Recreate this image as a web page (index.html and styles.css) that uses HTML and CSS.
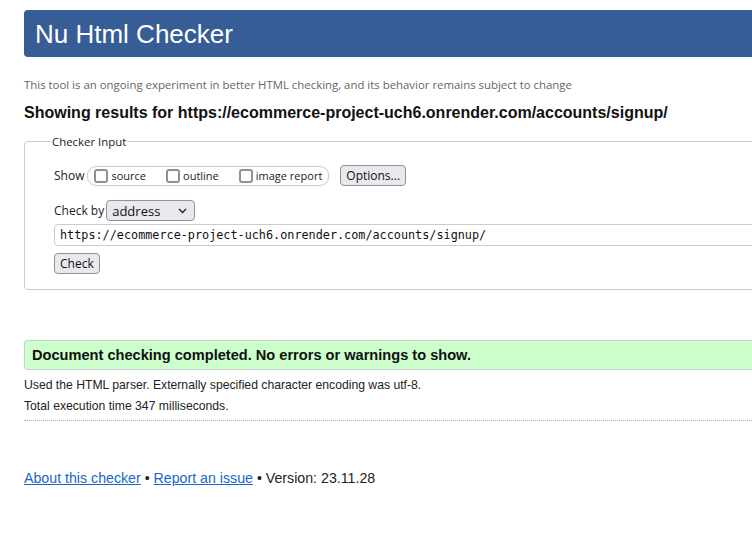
FILE: index.html
```html
<!DOCTYPE html>
<html lang="en">
<head>
    <meta charset="UTF-8">
    <meta name="viewport" content="width=device-width, initial-scale=1.0">
    <title>Nu Html Checker</title>
    <link rel="stylesheet" href="styles.css">
</head>
<body>
    <h1 class="masthead">Nu Html Checker</h1>
    <p class="tagline">This tool is an ongoing experiment in better HTML checking, and its behavior remains subject to change</p>
    <h2 class="results-for">Showing results for https://ecommerce-project-uch6.onrender.com/accounts/signup/</h2>

    <form class="checker-form">
        <fieldset class="checker-input">
            <legend>Checker Input</legend>
            <div class="show-row">
                <span class="row-label">Show</span>
                <span class="show-group">
                    <label><input type="checkbox" name="showsource"> source</label>
                    <label><input type="checkbox" name="showoutline"> outline</label>
                    <label><input type="checkbox" name="showimagereport"> image report</label>
                </span>
                <button type="button" class="btn">Options...</button>
            </div>
            <div class="checkby-row">
                <span class="row-label">Check by</span>
                <span class="select-wrap">
                    <select name="docselect">
                        <option>address</option>
                    </select>
                    <svg class="chevron" width="9" height="6" viewBox="0 0 9 6"><path d="M1 1 L4.5 4.5 L8 1" fill="none" stroke="#222" stroke-width="1.4"/></svg>
                </span>
            </div>
            <input class="doc-url" type="url" name="doc" value="https://ecommerce-project-uch6.onrender.com/accounts/signup/">
            <div>
                <button type="button" class="btn">Check</button>
            </div>
        </fieldset>
    </form>

    <p class="success">Document checking completed. No errors or warnings to show.</p>
    <p class="details">Used the HTML parser. Externally specified character encoding was utf-8.</p>
    <p class="details">Total execution time 347 milliseconds.</p>
    <hr class="dotted">

    <p class="footer">
        <a href="#">About this checker</a> &bull; <a href="#">Report an issue</a> &bull; Version: 23.11.28
    </p>
</body>
</html>
```

FILE: styles.css
```css
html {
    overflow: hidden;
}
body {
    font-family: "Liberation Sans", Arial, sans-serif;
    color: #222;
    background: #fff;
    margin: 10px -60px 0 24px;
}
.masthead {
    margin: 0;
    height: 47px;
    padding-left: 11px;
    background-color: #365d95;
    color: #fff;
    font-weight: normal;
    font-size: 26px;
    line-height: 49px;
    border-radius: 4px;
}
.tagline {
    margin: 20px 0 0;
    font-family: "Open Sans", "Noto Sans", sans-serif;
    font-size: 11.4px;
    color: #666;
    line-height: 16px;
}
.results-for {
    margin: 10px 0 0;
    font-size: 16px;
    font-weight: bold;
    color: #111;
    line-height: 20px;
}
.checker-form {
    margin-top: 11px;
}
.checker-input {
    margin: 0;
    border: 1px solid #ccc;
    border-radius: 4px;
    padding: 4px 0 15px 29px;
    font-family: "Open Sans", "Noto Sans", sans-serif;
    font-size: 12px;
    color: #222;
}
.checker-input legend {
    margin-left: -3px;
    padding: 0 1px;
    font-size: 11.4px;
}
.show-row,
.checkby-row {
    display: flex;
    align-items: center;
    gap: 2px;
}
.show-row {
    margin-top: 12px;
}
.show-row .row-label {
    margin-right: 1px;
}
.checkby-row {
    margin-top: 14px;
}
.show-group {
    display: inline-flex;
    align-items: center;
    gap: 20px;
    height: 18px;
    padding: 0 6px 0 6px;
    border: 1px solid #ccc;
    border-radius: 9px;
    font-size: 11px;
}
.show-group label {
    display: inline-flex;
    align-items: center;
    gap: 3px;
}
.show-group input[type="checkbox"] {
    appearance: none;
    margin: 0;
    width: 14px;
    height: 14px;
    border: 2px solid #8f8f9d;
    border-radius: 3px;
    background: #fff;
}
.btn {
    font-family: "Open Sans", "Noto Sans", sans-serif;
    font-size: 12px;
    color: #111;
    background-color: #e9e9ed;
    border: 1px solid #8f8f9d;
    border-radius: 4px;
    height: 21px;
    padding: 0 5px;
    cursor: pointer;
}
.show-row .btn {
    margin-left: 9px;
}
.select-wrap {
    position: relative;
    display: inline-block;
}
.select-wrap select {
    appearance: none;
    width: 89px;
    height: 21px;
    padding: 0 0 0 5px;
    font-family: "Open Sans", "Noto Sans", sans-serif;
    font-size: 13px;
    color: #111;
    background-color: #e9e9ed;
    border: 1px solid #8f8f9d;
    border-radius: 4px;
}
.select-wrap .chevron {
    position: absolute;
    right: 8px;
    top: 8px;
    pointer-events: none;
}
.doc-url {
    display: block;
    box-sizing: border-box;
    width: calc(100% - 10px);
    height: 22px;
    margin: 3px 0 7px;
    padding: 0 5px;
    font-family: "DejaVu Sans Mono", "Liberation Mono", monospace;
    font-size: 11.8px;
    color: #111;
    border: 1px solid #ccc;
    border-radius: 4px;
}
.success {
    margin: 50px 0 0;
    padding: 0 7px;
    height: 28px;
    line-height: 28px;
    background-color: #ccffcc;
    border: 1px solid #ccc;
    border-radius: 3px;
    font-size: 14.6px;
    font-weight: bold;
    color: #111;
}
.details {
    margin: 8px 0 0;
    font-size: 12.2px;
    line-height: 15px;
    color: #222;
}
.details + .details {
    margin-top: 6px;
}
.dotted {
    margin: 6px 0 0;
    border: none;
    border-top: 1px dotted #aaa;
}
.footer {
    margin: 48px 0 0;
    font-size: 14.2px;
    line-height: 18px;
    color: #222;
}
.footer a {
    color: #1a66c8;
}
```
